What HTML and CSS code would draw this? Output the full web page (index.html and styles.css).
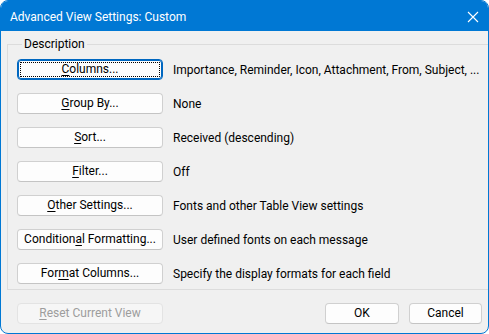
FILE: index.html
```html
<!DOCTYPE html>
<html>
<head>
<meta charset="utf-8">
<link rel="stylesheet" href="styles.css">
</head>
<body>
<div class="window">
  <div class="titlebar">
    <span class="title">Advanced View Settings: Custom</span>
    <svg class="close" width="12" height="12" viewBox="0 0 12 12"><path d="M1 1 L11 11 M11 1 L1 11" stroke="#fff" stroke-width="1.1" fill="none"/></svg>
  </div>
  <div class="content">
    <fieldset class="group">
      <legend class="legend">Description</legend>
      <div class="row"><button class="btn focused"><u>C</u>olumns...</button><span class="desc">Importance, Reminder, Icon, Attachment, From, Subject, ...</span></div>
      <div class="row"><button class="btn"><u>G</u>roup By...</button><span class="desc">None</span></div>
      <div class="row"><button class="btn"><u>S</u>ort...</button><span class="desc">Received (descending)</span></div>
      <div class="row"><button class="btn"><u>F</u>ilter...</button><span class="desc">Off</span></div>
      <div class="row"><button class="btn"><u>O</u>ther Settings...</button><span class="desc">Fonts and other Table View settings</span></div>
      <div class="row"><button class="btn">Condition<u>a</u>l Formatting...</button><span class="desc">User defined fonts on each message</span></div>
      <div class="row"><button class="btn">For<u>m</u>at Columns...</button><span class="desc">Specify the display formats for each field</span></div>
    </fieldset>
    <div class="footer">
      <button class="btn disabled"><u>R</u>eset Current View</button>
      <div class="actions">
        <button class="btn ok">OK</button>
        <button class="btn cancel">Cancel</button>
      </div>
    </div>
  </div>
</div>
</body>
</html>
```
FILE: styles.css
```css
html, body {
  margin: 0;
  padding: 0;
  background: #ffffff;
}
body {
  font-family: Roboto, "Noto Sans", sans-serif;
  font-size: 12px;
  color: #000;
}
.window {
  width: 489px;
  height: 334px;
  box-sizing: border-box;
  border: 1px solid #0078d4;
  border-radius: 8px;
  background: #f0f0f0;
  overflow: hidden;
  display: flex;
  flex-direction: column;
}
.titlebar {
  height: 30px;
  background: #0078d4;
  color: #fff;
  display: flex;
  align-items: center;
  justify-content: space-between;
  padding: 0 9px 0 9px;
  flex: none;
}
.title {
  font-size: 12px;
  line-height: 16px;
  margin-top: 1px;
}
.close {
  display: block;
  margin-top: 1px;
}
.content {
  flex: 1;
  display: flex;
  flex-direction: column;
  padding: 5px 6px 0 6px;
}
.group {
  margin: 0;
  border: 1px solid #dcdcdc;
  padding: 7px 9px 5px 9px;
  display: flex;
  flex-direction: column;
  gap: 13px;
}
.legend {
  padding: 0 2px;
  margin-left: 5px;
  line-height: 16px;
}
.row {
  display: flex;
  align-items: center;
  gap: 10px;
  height: 21px;
}
.btn {
  font-family: inherit;
  font-size: 12px;
  color: #000;
  background: #fdfdfd;
  border: 1px solid #d0d0d0;
  border-bottom-color: #c4c4c4;
  border-radius: 4px;
  height: 21px;
  width: 146px;
  padding: 0;
  margin: 0;
  line-height: 17px;
  flex: none;
}
.btn u {
  text-underline-offset: 2px;
}
.focused {
  border: 1px solid #0067c0;
  box-shadow: inset 0 0 0 1px #0067c0;
  outline: 1px dotted #000;
  outline-offset: -4px;
}
.desc {
  white-space: nowrap;
}
.footer {
  display: flex;
  justify-content: space-between;
  margin-top: 13px;
  padding: 0 0 0 10px;
}
.disabled {
  background: #f6f6f6;
  border-color: #e3e3e3;
  color: #9d9d9d;
}
.actions {
  display: flex;
  gap: 10px;
}
.ok {
  width: 74px;
}
.cancel {
  width: 73px;
}
```
